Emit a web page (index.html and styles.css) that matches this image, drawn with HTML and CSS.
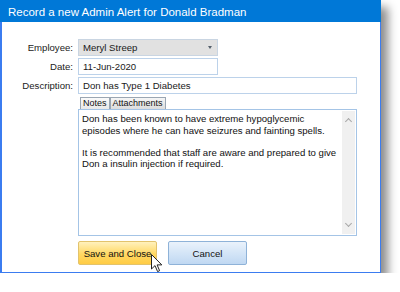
FILE: index.html
```html
<!DOCTYPE html>
<html lang="en">
<head>
<meta charset="UTF-8">
<title>Record a new Admin Alert</title>
<link rel="stylesheet" href="styles.css">
</head>
<body>
  <div class="window">
    <div class="title-bar">Record a new Admin Alert for Donald Bradman</div>

    <div class="window-body">
      <div class="form-grid">
        <label class="form-label">Employee:</label>
        <div class="combo">
          <span>Meryl Streep</span>
          <span class="combo-arrow"></span>
        </div>

        <label class="form-label">Date:</label>
        <div class="field field-short">11-Jun-2020</div>

        <label class="form-label">Description:</label>
        <div class="field">Don has Type 1 Diabetes</div>

        <div></div>
        <div class="notes-panel">
          <div class="tabs">
            <span class="tab tab-active">Notes</span>
            <span class="tab">Attachments</span>
          </div>
          <div class="memo">
            <div class="memo-text">
              <p>Don has been known to have extreme hypoglycemic<br>episodes where he can have seizures and fainting spells.</p>
              <p>It is recommended that staff are aware and prepared to give<br>Don a insulin injection if required.</p>
            </div>
            <div class="scrollbar">
              <span class="scroll-up"></span>
              <span class="scroll-down"></span>
            </div>
          </div>
        </div>

        <div></div>
        <div class="button-row">
          <button class="btn btn-save">Save and Close</button>
          <button class="btn btn-cancel">Cancel</button>
        </div>
      </div>
    </div>

    <!-- mouse pointer over the save button -->
    <svg class="cursor" width="12" height="19" viewBox="0 0 12 19">
      <path d="M0.5 0.5 L0.5 15 L4 11.6 L6.6 17.6 L8.6 16.7 L6.1 10.9 L10.8 10.9 Z" fill="#fff" stroke="#222" stroke-width="1"/>
    </svg>
  </div>
</body>
</html>
```

FILE: styles.css
```css
* {
  margin: 0;
  padding: 0;
  box-sizing: border-box;
}

body {
  background: #fff;
  font-family: 'Liberation Sans', Arial, sans-serif;
  font-size: 9.6px;
  color: #1a1a1a;
}

.window {
  position: relative;
  width: 381px;
  height: 273px;
  border: 1px solid #3b7cf0;
  border-left-width: 2px;
  border-top: none;
  background: #fff;
  box-shadow: 7px 7px 9px rgba(0, 0, 0, 0.45);
}

.title-bar {
  height: 22px;
  margin: 0 -1px 0 -2px;
  padding: 6px 0 0 8px;
  background: #0078d7;
  color: #fff;
  font-size: 11.5px;
}

.window-body {
  padding-top: 17px;
}

.form-grid {
  display: grid;
  grid-template-columns: 71px 279px;
  column-gap: 5px;
  row-gap: 2px;
  align-items: center;
}

.form-label {
  text-align: right;
  color: #222;
}

.combo {
  width: 140px;
  height: 17px;
  display: flex;
  align-items: center;
  justify-content: space-between;
  padding: 0 5px 0 4px;
  background: #e1e1e1;
  border: 1px solid #c9d5e2;
}

.combo-arrow {
  width: 0;
  height: 0;
  border-left: 2.5px solid transparent;
  border-right: 2.5px solid transparent;
  border-top: 3px solid #55606c;
}

.field {
  height: 17px;
  padding: 2px 4px 0;
  border: 1px solid #bcd2ea;
  background: #fff;
}

.field-short {
  width: 140px;
}

.notes-panel {
  margin-top: 1px;
}

.tabs {
  display: flex;
  padding-left: 2px;
  height: 12px;
}

.tab {
  padding: 0 2px;
  font-size: 9px;
  line-height: 11px;
  border: 1px solid #9aa6b3;
  border-bottom: none;
  background: linear-gradient(#f6f6f6, #dcdcdc);
  color: #111;
}

.tab-active {
  background: linear-gradient(#fafafa, #e9e9e9);
}

.memo {
  display: flex;
  height: 127px;
  border: 1px solid #a4c4e6;
  background: #fff;
}

.memo-text {
  flex: 1;
  padding: 3px 3px;
  line-height: 11.5px;
  color: #111;
}

.memo-text p {
  margin-bottom: 10.5px;
}

.scrollbar {
  width: 13px;
  margin: 1px;
  background: #f0f0f0;
  display: flex;
  flex-direction: column;
  justify-content: space-between;
  align-items: center;
  padding: 6px 0;
}

.scroll-up,
.scroll-down {
  width: 5px;
  height: 5px;
  border-left: 1px solid #a8a8a8;
  border-top: 1px solid #a8a8a8;
}

.scroll-up {
  transform: rotate(45deg);
  margin-top: 2px;
}

.scroll-down {
  transform: rotate(-135deg);
  margin-bottom: 2px;
}

.button-row {
  display: flex;
  gap: 11px;
  margin-top: 3px;
}

.btn {
  width: 79px;
  height: 24px;
  font-family: 'Liberation Sans', Arial, sans-serif;
  font-size: 9.6px;
  color: #111;
  border-radius: 2px;
}

.btn-save {
  border: 1px solid #e2c36d;
  background: linear-gradient(#fff1bd, #ffd863 55%, #ffcc45);
}

.btn-cancel {
  border: 1px solid #8eb2d8;
  background: linear-gradient(#eaf2fb, #d4e5f7 50%, #c0d8f2);
}

.cursor {
  position: absolute;
  left: 149px;
  top: 254px;
}
```
